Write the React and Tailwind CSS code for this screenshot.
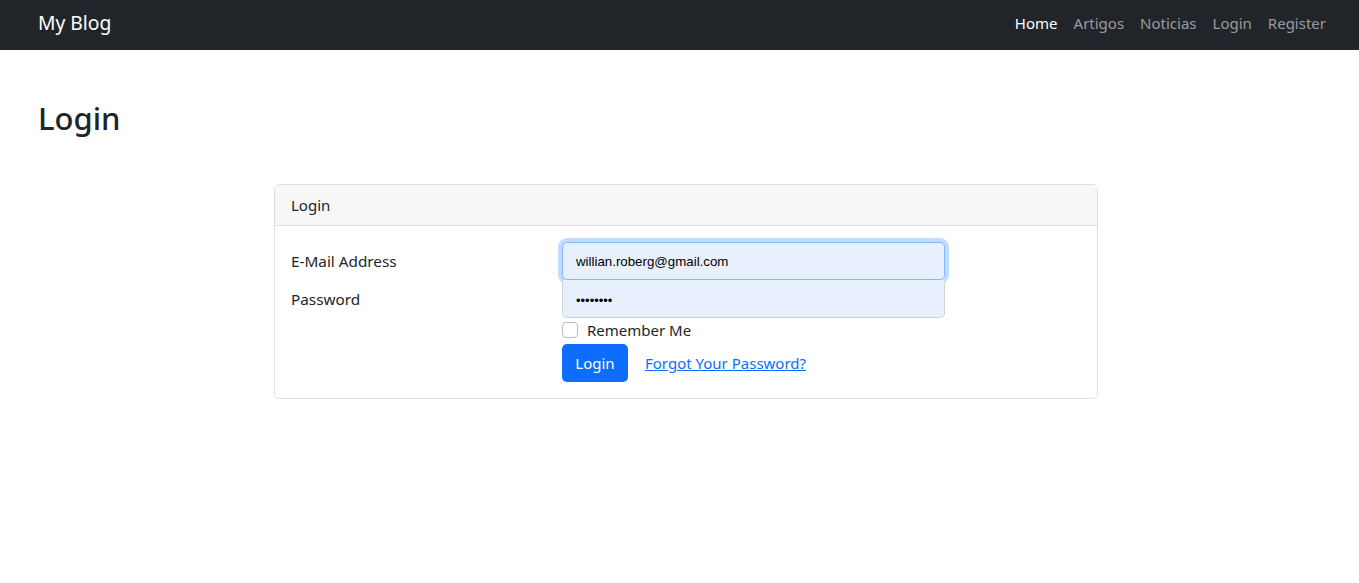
import React from "react";

export default function App() {
  return (
    <div className="min-h-[583px] bg-white font-['Noto_Sans',sans-serif] text-[#212529]">
      <nav className="h-[50px] bg-[#212529] flex items-center justify-between pl-[38px] pr-[25px] pb-[4px]">
        <span className="text-[19.3px] text-white leading-none">My Blog</span>
        <ul className="flex items-center text-[15px]">
          <li className="px-2 text-white">Home</li>
          <li className="px-2 text-[#ffffff8c]">Artigos</li>
          <li className="px-2 text-[#ffffff8c]">Noticias</li>
          <li className="px-2 text-[#ffffff8c]">Login</li>
          <li className="px-2 text-[#ffffff8c]">Register</li>
        </ul>
      </nav>
      <div className="px-[38px]">
        <h1 className="mt-[50px] text-[31px] font-medium leading-[1.2]">Login</h1>
        <div className="flex mt-[47px] ml-[236px]">
          <div className="w-[824px] border border-[#dfdfdf] rounded-[5px]">
            <div className="h-[41px] bg-[#f7f7f7] border-b border-[#dfdfdf] flex items-center px-4 text-[15px]">
              Login
            </div>
            <div className="px-4 pt-4 pb-4">
              <div className="flex">
                <div className="w-[271px] text-[15.3px]">
                  <div className="h-[38px] flex items-center">E-Mail Address</div>
                  <div className="h-[38px] flex items-center">Password</div>
                </div>
                <div className="w-[383px]">
                  <div className="h-[38px] rounded-[5px] border border-[#86b7fe] bg-[#e8f0fe] shadow-[0_0_0_4px_rgba(13,110,253,0.25)] flex items-center px-[13px] pt-[2px] font-['Liberation_Sans',Arial,sans-serif] text-[13.3px] text-black">
                    willian.roberg@gmail.com
                  </div>
                  <div className="h-[38px] rounded-b-[5px] border border-t-0 border-[#ced4da] bg-[#e8f0fe] flex items-center px-[13px] pt-[4px] font-['Liberation_Sans',Arial,sans-serif] text-[13px] text-black">
                    ••••••••
                  </div>
                  <label className="mt-[4px] flex items-center h-[16px] text-[15px]">
                    <span className="w-4 h-4 rounded-[4px] border border-[#bcbcbc] bg-white"></span>
                    <span className="ml-[9px]">Remember Me</span>
                  </label>
                  <div className="mt-[6px] flex items-center">
                    <button className="h-[38px] w-[66px] rounded-[5px] bg-[#0d6efd] text-white text-[15px]">Login</button>
                    <a className="ml-[17px] text-[15px] text-[#0d6efd] underline">Forgot Your Password?</a>
                  </div>
                </div>
              </div>
            </div>
          </div>
        </div>
      </div>
    </div>
  );
}
